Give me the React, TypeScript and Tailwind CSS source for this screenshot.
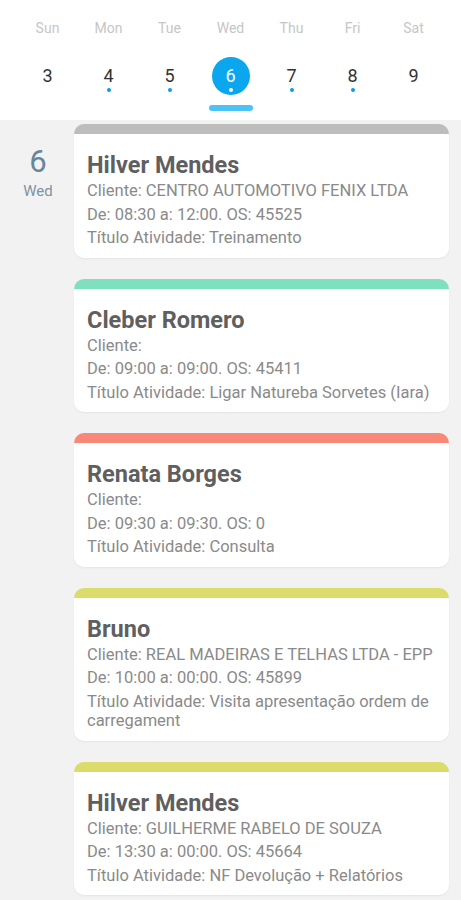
import React from "react";

interface Agenda {
  nome: string;
  cliente: string;
  horario: string;
  titulo: string;
  cor: string;
}

const dias = [
  { nome: "Sun", num: 3, marca: false },
  { nome: "Mon", num: 4, marca: true },
  { nome: "Tue", num: 5, marca: true },
  { nome: "Wed", num: 6, marca: true },
  { nome: "Thu", num: 7, marca: true },
  { nome: "Fri", num: 8, marca: true },
  { nome: "Sat", num: 9, marca: false },
];

const agendas: Agenda[] = [
  {
    nome: "Hilver Mendes",
    cliente: "Cliente: CENTRO AUTOMOTIVO FENIX LTDA",
    horario: "De: 08:30 a: 12:00. OS: 45525",
    titulo: "Título Atividade: Treinamento",
    cor: "border-[#bdbdbd]",
  },
  {
    nome: "Cleber Romero",
    cliente: "Cliente:",
    horario: "De: 09:00 a: 09:00. OS: 45411",
    titulo: "Título Atividade: Ligar Natureba Sorvetes (Iara)",
    cor: "border-[#7fe0c0]",
  },
  {
    nome: "Renata Borges",
    cliente: "Cliente:",
    horario: "De: 09:30 a: 09:30. OS: 0",
    titulo: "Título Atividade: Consulta",
    cor: "border-[#f88878]",
  },
  {
    nome: "Bruno",
    cliente: "Cliente: REAL MADEIRAS E TELHAS LTDA - EPP",
    horario: "De: 10:00 a: 00:00. OS: 45899",
    titulo: "Título Atividade: Visita apresentação ordem de carregament",
    cor: "border-[#dcdc6c]",
  },
  {
    nome: "Hilver Mendes",
    cliente: "Cliente: GUILHERME RABELO DE SOUZA",
    horario: "De: 13:30 a: 00:00. OS: 45664",
    titulo: "Título Atividade: NF Devolução + Relatórios",
    cor: "border-[#dcdc6c]",
  },
];

const CardAgenda: React.FC<{ item: Agenda }> = ({ item }) => {
  return (
    <div
      className={`bg-white rounded-[10px] border-t-[10px] ${item.cor} shadow-[0_1px_2px_rgba(0,0,0,0.06)] px-[13px] pt-[17px] pb-[10px]`}
    >
      <h2 className="text-[23.5px] leading-[28px] font-bold text-[#5f5f5f]">{item.nome}</h2>
      <div className="text-[16.5px] leading-[19.5px] text-[#8a8a8a] flex flex-col gap-[4px] pt-[2px]">
        <p>{item.cliente}</p>
        <p>{item.horario}</p>
        <p>{item.titulo}</p>
      </div>
    </div>
  );
};

export default function App() {
  return (
    <div className="w-[461px] h-[900px] overflow-hidden bg-[#f2f2f2] font-['Roboto',sans-serif]">
      {/* calendario semanal */}
      <div className="bg-white h-[120px] px-[17px] pt-[18px] grid grid-cols-7">
        {dias.map((d) => {
          const ativo = d.num === 6;
          return (
            <div key={d.nome} className="flex flex-col items-center">
              <span className="text-[14px] leading-[20px] text-[#c6c6c6]">{d.nome}</span>
              <div className="relative mt-[19px] w-[38px] h-[38px] flex items-center justify-center">
                {ativo && <div className="absolute inset-0 rounded-full bg-[#0aa6ee]" />}
                <span
                  className={`relative text-[18px] leading-none ${ativo ? "text-white" : "text-[#333333]"}`}
                >
                  {d.num}
                </span>
                {d.marca && (
                  <span
                    className={`absolute left-1/2 -translate-x-1/2 bottom-[3px] w-[4px] h-[4px] rounded-full ${
                      ativo ? "bg-white" : "bg-[#0a9ee4]"
                    }`}
                  />
                )}
              </div>
              {ativo && <div className="mt-[10px] w-[44px] h-[6px] rounded-full bg-[#4cc2f5]" />}
            </div>
          );
        })}
      </div>

      {/* lista do dia */}
      <div className="flex pt-[4px]">
        <div className="w-[76px] shrink-0 flex flex-col items-center pt-[22px]">
          <span className="text-[31px] leading-[32px] text-[#67859c]">6</span>
          <span className="text-[15px] leading-[18px] mt-[4px] text-[#7e93a4]">Wed</span>
        </div>
        <div className="flex-1 pr-[12px] flex flex-col gap-[21px] -ml-[2px]">
          {agendas.map((a, i) => (
            <CardAgenda key={i} item={a} />
          ))}
        </div>
      </div>
    </div>
  );
}
